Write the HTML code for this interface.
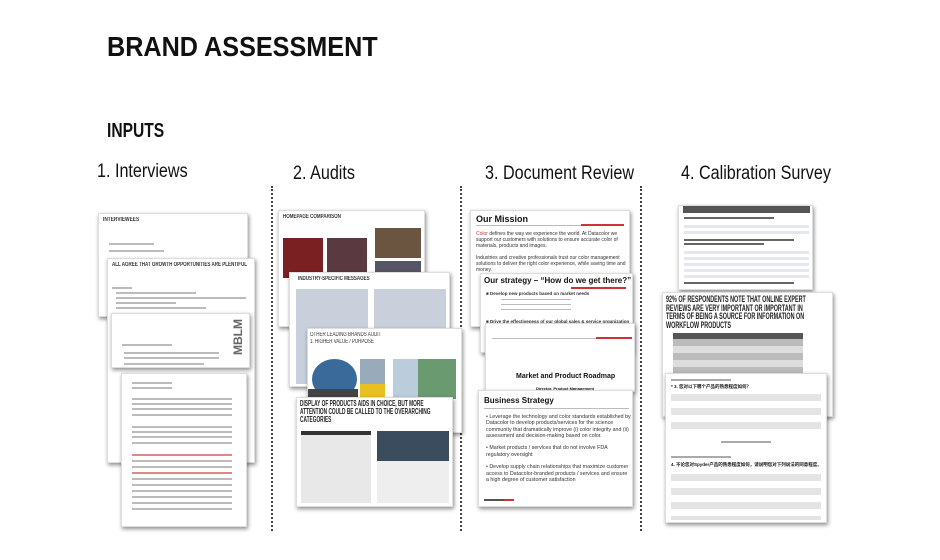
<!DOCTYPE html>
<html><head><meta charset="utf-8"><style>
*{margin:0;padding:0;box-sizing:border-box}
body{width:940px;height:560px;background:#fff;position:relative;overflow:hidden;font-family:"Liberation Sans","Noto Sans CJK SC",sans-serif;color:#111}
.a{position:absolute}
.t{white-space:nowrap;transform-origin:0 0}
.card{position:absolute;background:#fff;box-shadow:1px 2px 4px rgba(0,0,0,.45);overflow:hidden;border:1px solid #ddd}
.l{position:absolute;height:2px;background:#bbb}
.h{position:absolute;font-weight:bold;font-size:6px;white-space:nowrap;color:#333;transform-origin:0 0}
.dot{position:absolute;width:0;border-left:2px dotted #444}
.img{position:absolute}
</style></head><body>
<div class="a t" style="left:107px;top:31px;font-size:28px;font-weight:bold;transform:scaleX(.9)">BRAND ASSESSMENT</div>
<div class="a t" style="left:107px;top:120px;font-size:20px;font-weight:bold;transform:scaleX(.78)">INPUTS</div>
<div class="a t" style="left:97px;top:161px;font-size:19px;transform:scaleX(.85)">1. Interviews</div>
<div class="a t" style="left:293px;top:163px;font-size:19px;transform:scaleX(.85)">2. Audits</div>
<div class="a t" style="left:485px;top:163px;font-size:19px;transform:scaleX(.85)">3. Document Review</div>
<div class="a t" style="left:681px;top:163px;font-size:19px;transform:scaleX(.85)">4. Calibration Survey</div>
<div class="dot" style="left:271px;top:186px;height:345px"></div>
<div class="dot" style="left:460px;top:186px;height:345px"></div>
<div class="dot" style="left:640px;top:186px;height:345px"></div>

<!-- col1 -->
<div class="card" style="left:98px;top:213px;width:150px;height:104px">
<div class="h" style="left:4px;top:3px;transform:scaleX(.8)">INTERVIEWEES</div>
<div class="l" style="left:10px;top:29px;width:45px"></div><div class="l" style="left:10px;top:36px;width:55px"></div>
</div>
<div class="card" style="left:107px;top:258px;width:148px;height:205px">
<div class="h" style="left:4px;top:3px;transform:scaleX(.75)">ALL AGREE THAT GROWTH OPPORTUNITIES ARE PLENTIFUL</div>
<div class="l" style="left:4px;top:28px;width:20px"></div><div class="l" style="left:8px;top:33px;width:80px"></div><div class="l" style="left:8px;top:38px;width:130px"></div><div class="l" style="left:8px;top:43px;width:60px"></div><div class="l" style="left:8px;top:48px;width:90px"></div>
</div>
<div class="card" style="left:111px;top:313px;width:139px;height:55px">
<div class="a" style="right:4px;top:5px;font-size:12px;font-weight:bold;color:#666;writing-mode:vertical-rl;transform:rotate(180deg)">MBLM</div>
<div class="l" style="left:10px;top:30px;width:50px"></div><div class="l" style="left:12px;top:38px;width:95px"></div><div class="l" style="left:12px;top:43px;width:95px"></div><div class="l" style="left:12px;top:49px;width:80px"></div>
</div>
<div class="card" style="left:121px;top:373px;width:126px;height:154px">
<div class="l" style="left:10px;top:8px;width:40px"></div><div class="l" style="left:10px;top:13px;width:40px"></div>
<div class="l" style="left:10px;top:24px;width:100px"></div><div class="l" style="left:10px;top:29px;width:100px"></div><div class="l" style="left:10px;top:34px;width:100px"></div><div class="l" style="left:10px;top:40px;width:100px"></div>
<div class="l" style="left:10px;top:52px;width:100px"></div><div class="l" style="left:10px;top:57px;width:100px"></div><div class="l" style="left:10px;top:62px;width:100px"></div><div class="l" style="left:10px;top:68px;width:100px"></div>
<div class="l" style="left:10px;top:80px;width:100px;background:#d88"></div><div class="l" style="left:10px;top:86px;width:100px"></div><div class="l" style="left:10px;top:92px;width:100px"></div><div class="l" style="left:10px;top:98px;width:100px;background:#d88"></div><div class="l" style="left:10px;top:104px;width:100px"></div><div class="l" style="left:10px;top:110px;width:100px"></div><div class="l" style="left:10px;top:116px;width:100px"></div><div class="l" style="left:10px;top:122px;width:100px"></div><div class="l" style="left:10px;top:128px;width:100px"></div><div class="l" style="left:10px;top:134px;width:100px"></div>
</div>

<!-- col2 -->
<div class="card" style="left:278px;top:210px;width:147px;height:117px">
<div class="h" style="left:4px;top:3px;transform:scaleX(.75)">HOMEPAGE COMPARISON</div>
<div class="img" style="left:4px;top:27px;width:40px;height:40px;background:#7a1f22"></div>
<div class="img" style="left:48px;top:27px;width:40px;height:40px;background:#5a3a40"></div>
<div class="img" style="left:96px;top:17px;width:46px;height:30px;background:#6b5540"></div>
<div class="img" style="left:96px;top:50px;width:46px;height:20px;background:#556"></div>
</div>
<div class="card" style="left:289px;top:272px;width:161px;height:115px">
<div class="h" style="left:8px;top:3px;transform:scaleX(.75)">INDUSTRY-SPECIFIC MESSAGES</div>
<div class="img" style="left:6px;top:16px;width:72px;height:95px;background:#c9d0dc"></div>
<div class="img" style="left:84px;top:16px;width:72px;height:55px;background:#c9d0dc"></div>
</div>
<div class="card" style="left:307px;top:328px;width:155px;height:105px">
<div class="h" style="left:2px;top:3px;transform:scaleX(.75);font-weight:normal">OTHER LEADING BRANDS AUDIT</div>
<div class="h" style="left:2px;top:10px;transform:scaleX(.75);font-weight:normal">1. HIGHER VALUE / PURPOSE</div>
<div class="img" style="left:4px;top:30px;width:45px;height:40px;background:#3a6a9a;border-radius:50%"></div>
<div class="img" style="left:52px;top:30px;width:25px;height:25px;background:#9ab"></div>
<div class="img" style="left:52px;top:55px;width:25px;height:25px;background:#e8c020"></div>
<div class="img" style="left:0px;top:60px;width:50px;height:25px;background:#444"></div>
<div class="img" style="left:85px;top:30px;width:25px;height:40px;background:#bcd"></div>
<div class="img" style="left:110px;top:30px;width:38px;height:40px;background:#6a9a70"></div>
</div>
<div class="card" style="left:296px;top:397px;width:157px;height:110px">
<div class="a t" style="left:3px;top:2px;font-size:8px;font-weight:bold;line-height:8px;transform:scaleX(.6);color:#222">DISPLAY OF PRODUCTS AIDS IN CHOICE, BUT MORE<br>ATTENTION COULD BE CALLED TO THE OVERARCHING<br>CATEGORIES</div>
<div class="img" style="left:4px;top:33px;width:70px;height:72px;background:#e8e8e8;border-top:4px solid #333"></div>
<div class="img" style="left:80px;top:33px;width:72px;height:30px;background:#3b4c5e"></div>
<div class="img" style="left:80px;top:63px;width:72px;height:42px;background:#eee"></div>
</div>

<!-- col3 -->
<div class="card" style="left:470px;top:210px;width:160px;height:117px">
<div class="a t" style="left:5px;top:3px;font-size:9px;font-weight:bold">Our Mission</div>
<div class="l" style="left:5px;top:14px;width:148px;height:1px"></div><div class="l" style="left:110px;top:13px;width:43px;background:#c33"></div>
<div class="a" style="left:5px;top:20px;font-size:5px;line-height:6px;color:#333;width:150px"><span style="color:#c33">Color</span> defines the way we experience the world. At Datacolor we support our customers with solutions to ensure accurate color of materials, products and images.<br><br>Industries and creative professionals trust our color management solutions to deliver the right color experience, while saving time and money.</div>
</div>
<div class="card" style="left:480px;top:273px;width:153px;height:80px">
<div class="a t" style="left:3px;top:2px;font-size:8px;font-weight:bold">Our strategy – “How do we get there?”</div>
<div class="l" style="left:90px;top:13px;width:55px;background:#c33"></div>
<div class="a" style="left:5px;top:17px;font-size:4.5px;line-height:5px;font-weight:bold;color:#333">■ Develop new products based on market needs</div>
<div class="l" style="left:20px;top:25px;width:70px;height:1px"></div><div class="l" style="left:20px;top:30px;width:70px;height:1px"></div><div class="l" style="left:20px;top:35px;width:70px;height:1px"></div>
<div class="a" style="left:5px;top:45px;font-size:4.5px;font-weight:bold;color:#333">■ Drive the effectiveness of our global sales &amp; service organization</div>
</div>
<div class="card" style="left:485px;top:323px;width:150px;height:69px">
<div class="l" style="left:6px;top:14px;width:140px;height:1px"></div><div class="l" style="left:110px;top:13px;width:36px;background:#c33"></div>
<div class="a t" style="left:30px;top:49px;font-size:7px;font-weight:bold">Market and Product Roadmap</div>
<div class="a t" style="left:50px;top:62px;font-size:4px;font-weight:bold">Director, Product Management</div>
</div>
<div class="card" style="left:478px;top:390px;width:155px;height:117px">
<div class="a t" style="left:5px;top:5px;font-size:8px;font-weight:bold">Business Strategy</div>
<div class="l" style="left:5px;top:17px;width:145px;height:1px"></div>
<div class="a" style="left:7px;top:23px;font-size:5.3px;line-height:6.3px;color:#333;width:145px">• Leverage the technology and color standards established by Datacolor to develop products/services for the science community that dramatically improve (i) color integrity and (ii) assessment and decision-making based on color.<br><br>• Market products / services that do not involve FDA regulatory oversight<br><br>• Develop supply chain relationships that maximize customer access to Datacolor-branded products / services and ensure a high degree of customer satisfaction</div>
<div class="l" style="left:5px;top:108px;width:20px;background:#555"></div><div class="l" style="left:25px;top:108px;width:10px;background:#c33"></div>
</div>

<!-- col4 -->
<div class="card" style="left:678px;top:205px;width:135px;height:85px">
<div class="img" style="left:4px;top:0;width:127px;height:7px;background:#555"></div>
<div class="l" style="left:5px;top:11px;width:90px;height:1.5px;background:#666"></div>
<div class="img" style="left:5px;top:16px;width:125px;height:12px;background:repeating-linear-gradient(#fff 0 3px,#e6e6ee 3px 6px)"></div>
<div class="l" style="left:5px;top:33px;width:110px;height:1.5px;background:#666"></div><div class="l" style="left:5px;top:37px;width:80px;height:1.5px;background:#666"></div>
<div class="img" style="left:5px;top:42px;width:125px;height:30px;background:repeating-linear-gradient(#fff 0 3px,#e6e6ee 3px 6px)"></div>
<div class="l" style="left:5px;top:76px;width:110px;height:1.5px;background:#666"></div>
</div>
<div class="card" style="left:662px;top:292px;width:171px;height:125px">
<div class="a t" style="left:3px;top:3px;font-size:9.5px;font-weight:bold;line-height:8.5px;transform:scaleX(.57);color:#222">92% OF RESPONDENTS NOTE THAT ONLINE EXPERT<br>REVIEWS ARE VERY IMPORTANT OR IMPORTANT IN<br>TERMS OF BEING A SOURCE FOR INFORMATION ON<br>WORKFLOW PRODUCTS</div>
<div class="img" style="left:10px;top:40px;width:130px;height:6px;background:#555"></div>
<div class="img" style="left:10px;top:46px;width:130px;height:76px;background:repeating-linear-gradient(#bbb 0 7px,#ddd 7px 14px)"></div>
</div>
<div class="card" style="left:665px;top:373px;width:162px;height:150px">
<div class="l" style="left:5px;top:5px;width:60px;background:#aaa"></div>
<div class="a t" style="left:5px;top:10px;font-size:4.5px;font-weight:bold">* 3. 您对以下哪个产品的熟悉程度如何？</div>
<div class="img" style="left:5px;top:20px;width:150px;height:40px;background:repeating-linear-gradient(#e4e4e4 0 7px,#fff 7px 14px)"></div>
<div class="l" style="left:55px;top:67px;width:50px;background:#aaa"></div>
<div class="l" style="left:5px;top:82px;width:60px;background:#aaa"></div>
<div class="a t" style="left:5px;top:88px;font-size:4.5px;font-weight:bold">4. 不论您对Spyder产品的熟悉程度如何，请说明您对下列说法的同意程度。</div>
<div class="img" style="left:5px;top:100px;width:150px;height:46px;background:repeating-linear-gradient(#e4e4e4 0 7px,#fff 7px 14px)"></div>
</div>
</body></html>
